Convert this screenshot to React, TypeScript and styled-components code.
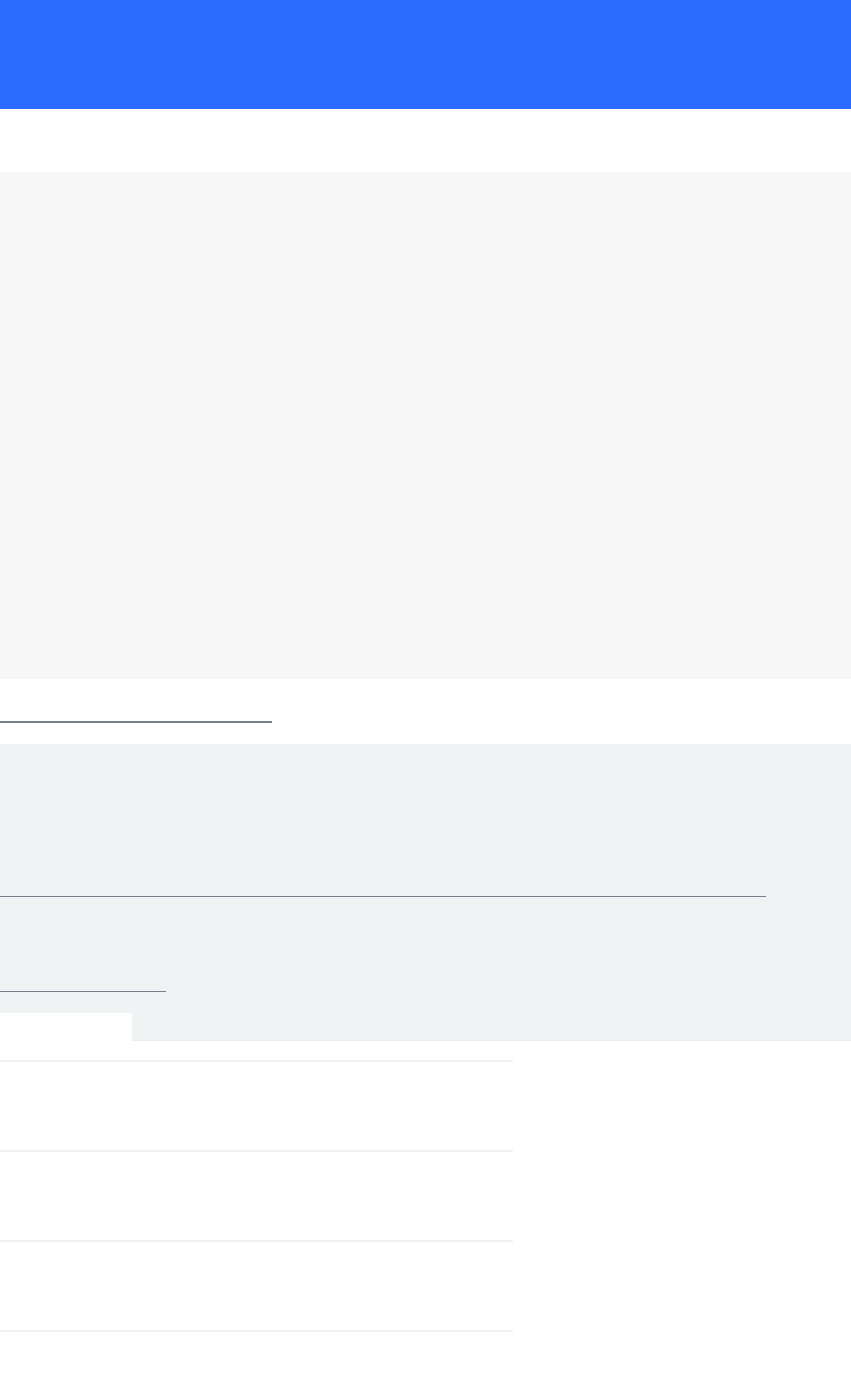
import { ReactElement } from 'react'
import styled, { createGlobalStyle } from 'styled-components'

const GlobalStyle = createGlobalStyle`
  html, body {
    margin: 0;
    padding: 0;
    background: #ffffff;
    font-family: 'Liberation Sans', Arial, sans-serif;
  }
`

const Page = styled.div`
  width: 851px;
  display: flex;
  flex-direction: column;
`

const Header = styled.header`
  height: 109px;
  background: #2d6bff;
`

const Hero = styled.section`
  margin-top: 63px;
  height: 507px;
  background: #f7f7f7;
`

const LinkRow = styled.div`
  padding-top: 42px;
  height: 44px;
  box-sizing: border-box;
`

const Underline = styled.div<{ $width: number; $thick?: number; $color?: string }>`
  width: ${({ $width }) => $width}px;
  height: 0;
  border-bottom: ${({ $thick = 1 }) => $thick}px solid ${({ $color = '#76808c' }) => $color};
`

const Panel = styled.section`
  margin-top: 21px;
  height: 297px;
  background: #eff3f4;
  display: flex;
  flex-direction: column;
  box-sizing: border-box;
`

const PanelLine = styled.div<{ $top: number }>`
  margin-top: ${({ $top }) => $top}px;
`

const PanelFoot = styled.div`
  margin-top: auto;
  display: flex;
  height: 28px;
`

const Tab = styled.div`
  width: 132px;
  background: #ffffff;
`

const TabRest = styled.div`
  flex: 1;
  border-bottom: 1px solid #e9eeef;
`

const List = styled.ul`
  list-style: none;
  margin: 19px 0 0;
  padding: 0;
  width: 513px;
  border-bottom: 2px solid #eef2f2;
`

const Row = styled.li`
  height: 88px;
  border-top: 2px solid #eef2f2;
`

const App = (): ReactElement => {
  return (
    <>
      <GlobalStyle />
      <Page>
        <Header />
        <Hero />
        <LinkRow>
          <Underline $width={272} $thick={2} />
        </LinkRow>
        <Panel>
          <PanelLine $top={152}>
            <Underline $width={766} />
          </PanelLine>
          <PanelLine $top={94}>
            <Underline $width={166} />
          </PanelLine>
          <PanelFoot>
            <Tab />
            <TabRest />
          </PanelFoot>
        </Panel>
        <List>
          <Row />
          <Row />
          <Row />
        </List>
      </Page>
    </>
  )
}

export default App
